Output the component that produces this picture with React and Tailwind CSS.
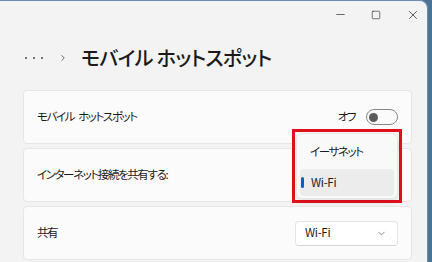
import { ChevronDown, ChevronRight, Minus, Square, X } from 'lucide-react';

const jp = "font-['Noto_Sans_CJK_JP',sans-serif] [font-feature-settings:'palt']";
const label = 'text-[11.5px] tracking-[-1.4px]';

function Card({ children, className = '' }) {
  return (
    <div className={'flex items-center justify-between h-[54px] pl-[13px] pr-[13px] bg-[#fbfbfb] border border-[#e6e6e6] rounded-[4px] ' + className}>
      {children}
    </div>
  );
}

export default function App() {
  return (
    <div className={'relative w-[432px] h-[262px] bg-[#4d7393] overflow-hidden text-[#1b1b1b] ' + jp}>
      <div className="w-[428px] h-[262px] bg-[#f3f3f3] border-t border-r border-[#6a8fb0] rounded-tr-[8px]">
        {/* caption buttons */}
        <div className="flex justify-end items-center h-[27px] text-[#1b1b1b]">
          <div className="w-[26px] flex justify-center"><Minus size={13} strokeWidth={1.2} /></div>
          <div className="w-[46px] flex justify-center"><Square size={10} strokeWidth={1.4} /></div>
          <div className="w-[28px] flex justify-center"><X size={14} strokeWidth={1.2} /></div>
        </div>

        {/* breadcrumb title */}
        <div className="flex items-center h-[62px] pb-[2px] pl-[25px]">
          <div className="flex gap-[6px]">
            <div className="w-[2px] h-[2px] rounded-full bg-[#4a4a4a]" />
            <div className="w-[2px] h-[2px] rounded-full bg-[#4a4a4a]" />
            <div className="w-[2px] h-[2px] rounded-full bg-[#4a4a4a]" />
          </div>
          <ChevronRight size={10} strokeWidth={1.8} className="ml-[15px] text-[#444]" />
          <span className="ml-[13px] text-[20px] font-medium leading-none tracking-[-0.6px]">モバイル ホットスポット</span>
        </div>

        <div className="flex flex-col gap-[4px] ml-[23px] w-[389px]">
          <Card>
            <span className={label}>モバイル<span className="ml-[4px]">ホットスポット</span></span>
            <div className="flex items-center gap-[11px]">
              <span className={label}>オフ</span>
              <div className="w-[32px] h-[16px] rounded-full border border-[#878787] flex items-center pl-[2px]">
                <div className="w-[9px] h-[9px] rounded-full bg-[#5c5c5c]" />
              </div>
            </div>
          </Card>
          <Card className="h-[53px]">
            <span className={label}>インターネット接続を共有する:</span>
          </Card>
          <Card>
            <span className={label}>共有</span>
            <div className="flex items-center justify-between w-[103px] h-[25px] pl-[9px] pr-[10px] bg-white border border-[#e4e4e4] border-b-[#d6d6d6] rounded-[4px]">
              <span className="text-[11.5px] tracking-[-0.3px]">Wi-Fi</span>
              <ChevronDown size={11} strokeWidth={1.4} className="text-[#555]" />
            </div>
          </Card>
        </div>
      </div>

      {/* open flyout with highlight box */}
      <div className="absolute left-[292px] top-[129px] w-[110px] h-[74px] border-[3px] border-[#e3101c] p-[1px]">
        <div className="h-full bg-[#f9f9f9] border border-[#e8e8e8] rounded-[6px] shadow-[0_2px_6px_rgba(0,0,0,0.12)] px-[3px] pt-[3px]">
          <div className={'h-[30px] flex items-center pl-[10px] ' + label}>イーサネット</div>
          <div className="relative mt-[2px] h-[27px] flex items-center pl-[11px] bg-[#ececec] rounded-[4px] text-[11.5px] tracking-[-0.3px]">
            <div className="absolute left-[1px] top-[8px] w-[3px] h-[11px] rounded-full bg-[#0a5fc4]" />
            Wi-Fi
          </div>
        </div>
      </div>
    </div>
  );
}
